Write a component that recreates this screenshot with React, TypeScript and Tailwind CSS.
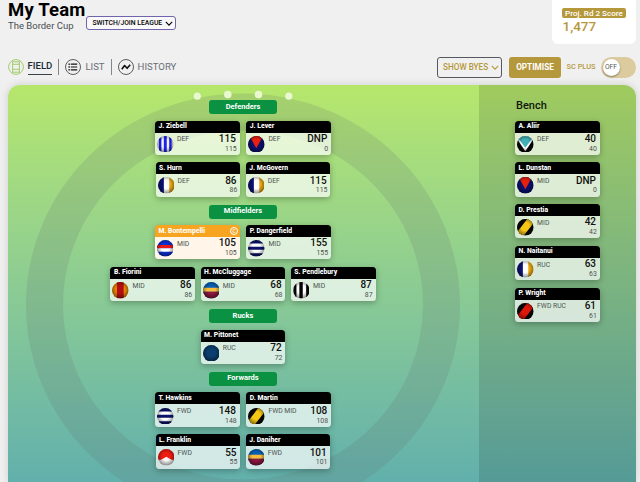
import { useId } from "react";
import clsx from "clsx";

type Team =
  | "north"
  | "melbourne"
  | "eagles"
  | "bulldogs"
  | "geelong"
  | "suns"
  | "lions"
  | "magpies"
  | "carlton"
  | "tigers"
  | "swans"
  | "power"
  | "bombers";

interface Player {
  name: string;
  pos: string;
  team: Team;
  score: string;
  proj: string;
  captain?: boolean;
}

interface Line {
  title: string;
  rows: { gap: string; players: Player[] }[];
}

const lines: Line[] = [
  {
    title: "Defenders",
    rows: [
      {
        gap: "gap-[6.6px]",
        players: [
          { name: "J. Ziebell", pos: "DEF", team: "north", score: "115", proj: "115" },
          { name: "J. Lever", pos: "DEF", team: "melbourne", score: "DNP", proj: "0" },
        ],
      },
      {
        gap: "gap-[5.4px]",
        players: [
          { name: "S. Hurn", pos: "DEF", team: "eagles", score: "86", proj: "86" },
          { name: "J. McGovern", pos: "DEF", team: "eagles", score: "115", proj: "115" },
        ],
      },
    ],
  },
  {
    title: "Midfielders",
    rows: [
      {
        gap: "gap-[6.6px]",
        players: [
          { name: "M. Bontempelli", pos: "MID", team: "bulldogs", score: "105", proj: "105", captain: true },
          { name: "P. Dangerfield", pos: "MID", team: "geelong", score: "155", proj: "155" },
        ],
      },
      {
        gap: "gap-[5.4px]",
        players: [
          { name: "B. Fiorini", pos: "MID", team: "suns", score: "86", proj: "86" },
          { name: "H. McCluggage", pos: "MID", team: "lions", score: "68", proj: "68" },
          { name: "S. Pendlebury", pos: "MID", team: "magpies", score: "87", proj: "87" },
        ],
      },
    ],
  },
  {
    title: "Rucks",
    rows: [
      {
        gap: "gap-0",
        players: [{ name: "M. Pittonet", pos: "RUC", team: "carlton", score: "72", proj: "72" }],
      },
    ],
  },
  {
    title: "Forwards",
    rows: [
      {
        gap: "gap-[6.6px]",
        players: [
          { name: "T. Hawkins", pos: "FWD", team: "geelong", score: "148", proj: "148" },
          { name: "D. Martin", pos: "FWD MID", team: "tigers", score: "108", proj: "108" },
        ],
      },
      {
        gap: "gap-[5.4px]",
        players: [
          { name: "L. Franklin", pos: "FWD", team: "swans", score: "55", proj: "55" },
          { name: "J. Daniher", pos: "FWD", team: "lions", score: "101", proj: "101" },
        ],
      },
    ],
  },
];

const bench: Player[] = [
  { name: "A. Aliir", pos: "DEF", team: "power", score: "40", proj: "40" },
  { name: "L. Dunstan", pos: "MID", team: "melbourne", score: "DNP", proj: "0" },
  { name: "D. Prestia", pos: "MID", team: "tigers", score: "42", proj: "42" },
  { name: "N. Naitanui", pos: "RUC", team: "eagles", score: "63", proj: "63" },
  { name: "P. Wright", pos: "FWD RUC", team: "bombers", score: "61", proj: "61" },
];

// Guernsey patterns, drawn on a 34x34 grid and clipped to a ball
const patterns: Record<Team, React.ReactNode> = {
  north: (
    <>
      <rect width="34" height="34" fill="#f4f4ff" />
      <path d="M4 0h5v34H4zM14 0h6v34h-6zM25 0h5v34h-5z" fill="#1a22ee" />
    </>
  ),
  melbourne: (
    <>
      <rect width="34" height="34" fill="#0a1070" />
      <path d="M3 0h28L17 25z" fill="#e8210c" />
    </>
  ),
  eagles: (
    <>
      <rect width="34" height="34" fill="#fff" />
      <path d="M0 0h12v34H0z" fill="#0b1272" />
      <path d="M23 0h11v34H23z" fill="#eeab14" />
    </>
  ),
  bulldogs: (
    <>
      <rect width="34" height="34" fill="#0c2fd6" />
      <path d="M0 10h34v7H0z" fill="#ea1a1a" />
      <path d="M0 17h34v7H0z" fill="#fff" />
    </>
  ),
  geelong: (
    <>
      <rect width="34" height="34" fill="#fff" />
      <path d="M0 0h34v7H0zM0 14h34v6H0zM0 27h34v7H0z" fill="#0b1268" />
    </>
  ),
  suns: (
    <>
      <rect width="34" height="34" fill="#ee8a08" />
      <path d="M10 0h14v34H10z" fill="#b30d12" />
    </>
  ),
  lions: (
    <>
      <rect width="34" height="34" fill="#0860b4" />
      <path d="M0 12h34v8H0z" fill="#f9bb3c" />
      <path d="M0 20h34v14H0z" fill="#8d173f" />
    </>
  ),
  magpies: (
    <>
      <rect width="34" height="34" fill="#fff" />
      <path d="M1 0h6v34H1zM13 0h7v34h-7zM27 0h6v34h-6z" fill="#050505" />
    </>
  ),
  carlton: <rect width="34" height="34" fill="#0b3e6e" />,
  tigers: (
    <>
      <rect width="34" height="34" fill="#060606" />
      <path d="M21 0h13v8L14 34H0v-7z" fill="#f4c616" />
    </>
  ),
  swans: (
    <>
      <rect width="34" height="34" fill="#f5f5f5" />
      <path d="M0 0h34v22l-6 0-6-3-5-3-5 3-6 3H0z" fill="#ef1c10" />
    </>
  ),
  power: (
    <>
      <rect width="34" height="34" fill="#050505" />
      <path d="M0 6l17 25L34 6V0H0z" fill="#fff" />
      <path d="M3 0h28v5L17 24 3 5z" fill="#3fb0b6" />
    </>
  ),
  bombers: (
    <>
      <rect width="34" height="34" fill="#060606" />
      <path d="M21 0h13v8L14 34H0v-7z" fill="#de1709" />
    </>
  ),
};

function TeamBall({ team }: { team: Team }) {
  const id = useId();

  return (
    <svg viewBox="0 0 34 34" className="size-[16.6px] shrink-0">
      <defs>
        <clipPath id={`${id}-clip`}>
          <circle cx="17" cy="17" r="17" />
        </clipPath>
        <radialGradient id={`${id}-shade`} cx="50%" cy="45%" r="55%">
          <stop offset="45%" stopColor="#000" stopOpacity="0" />
          <stop offset="100%" stopColor="#000" stopOpacity="0.45" />
        </radialGradient>
      </defs>
      <g clipPath={`url(#${id}-clip)`}>
        {patterns[team]}
        <rect width="34" height="34" fill={`url(#${id}-shade)`} />
      </g>
    </svg>
  );
}

function PlayerCard({ player }: { player: Player }) {
  return (
    <div className="h-[34.3px] w-[84.8px] shrink-0 overflow-hidden rounded-[3.5px] shadow-[0_2px_6px_rgba(0,0,0,0.28)]">
      <div
        className={clsx(
          "flex h-[12px] items-center justify-between pr-[1.5px] pl-[3.5px] text-[6.8px] leading-none font-extrabold text-white",
          player.captain ? "bg-[#f7a521]" : "bg-black"
        )}
      >
        <span>{player.name}</span>
        {player.captain && (
          <span className="flex size-[8px] items-center justify-center rounded-full border-[0.8px] border-white text-[5px] font-medium">
            C
          </span>
        )}
      </div>
      <div
        className={clsx(
          "flex h-[22.3px] pt-[3.2px] pr-[3px] pl-[2px]",
          player.captain ? "bg-[#fff6e9]" : "bg-white/70"
        )}
      >
        <TeamBall team={player.team} />
        <span className="mt-[0.6px] ml-[3.5px] text-[6.8px] leading-[7px] text-[#4c5350]">{player.pos}</span>
        <div className="-mt-[1.8px] ml-auto flex flex-col items-end">
          <span className="pr-[0.8px] text-[10px] leading-[10px] font-medium text-[#111]">{player.score}</span>
          <span className="mt-[0.8px] text-[6.9px] leading-[8px] text-[#4c5350]">{player.proj}</span>
        </div>
      </div>
    </div>
  );
}

function FieldBackdrop() {
  return (
    <svg viewBox="0 0 471 397" className="absolute top-0 left-0 h-[397px] w-[471px]">
      <ellipse cx="235" cy="220" rx="198.500" ry="193" fill="none" stroke="#606c6c" strokeOpacity="0.17" strokeWidth="37" />
      <g fill="#e9f8d0">
        <circle cx="189.300" cy="11.200" r="3.600" />
        <circle cx="219.800" cy="9.500" r="3.800" />
        <circle cx="250.500" cy="9.500" r="3.800" />
        <circle cx="280.800" cy="11.200" r="3.600" />
      </g>
    </svg>
  );
}

function Chevron({ className }: { className?: string }) {
  return (
    <svg viewBox="0 0 8 5" className={className} fill="none" stroke="currentColor" strokeWidth="1.1">
      <path d="M0.8 0.8 4 4.100 7.200 0.800" />
    </svg>
  );
}

function Tabs() {
  return (
    <nav className="flex items-center text-[9.6px] text-[#686f76]">
      <svg viewBox="0 0 16 16" className="-ml-[0.5px] size-4" fill="none" stroke="#8dc34b" strokeWidth="0.8">
        <circle cx="8" cy="8" r="7.400" />
        <path d="M4.600 2.600v10.800M11.400 2.600v10.800M4.600 5.300h6.800M4.600 10.300h6.800M4.600 2.800h6.800M4.600 13.200h6.800" />
      </svg>
      <span className="ml-[4px] h-[15px] border-b border-[#3b4248] text-[9.6px] leading-[11.5px] font-medium text-[#1b2b38]">
        FIELD
      </span>
      <span className="ml-[6px] h-4 w-px bg-[#83878a]" />
      <svg viewBox="0 0 16 16" className="ml-[6px] size-4" fill="none" stroke="#33373b" strokeWidth="0.8">
        <circle cx="8" cy="8" r="7.500" />
        <path d="M5.800 5.200h6.400M5.800 8h6.400M5.800 10.800h6.400" strokeWidth="1.200" stroke="#111" />
        <path d="M3.500 5.200h1.300M3.500 8h1.300M3.500 10.800h1.300" strokeWidth="1.400" stroke="#111" />
      </svg>
      <span className="ml-[4px]">LIST</span>
      <span className="ml-[6px] h-4 w-px bg-[#83878a]" />
      <svg viewBox="0 0 16 16" className="ml-[6px] size-4" fill="none" stroke="#33373b" strokeWidth="0.8">
        <circle cx="8" cy="8" r="7.500" />
        <path d="M3.800 10.300 6.600 6.500 9.100 9.300 12.200 5.700" strokeWidth="1.600" stroke="#111" strokeLinejoin="round" />
      </svg>
      <span className="ml-[4px]">HISTORY</span>
    </nav>
  );
}

function Header() {
  return (
    <header className="flex h-[57px] items-start justify-between pr-[4px] pl-[8px]">
      <div className="flex">
        <div className="w-[78px]">
          <h1 className="text-[18.5px] leading-[20.5px] font-bold tracking-[0.2px] whitespace-nowrap text-black">My Team</h1>
          <p className="text-[9.5px] leading-[10px] text-[#484d51]">The Border Cup</p>
        </div>
        <button className="mt-[16px] flex h-[14px] w-[90px] items-center justify-between rounded-[3px] border border-[#7065ad] bg-white/60 pr-[2px] pl-[5.5px] text-[6.8px] font-medium whitespace-nowrap text-black">
          SWITCH/JOIN LEAGUE
          <Chevron className="h-[5px] w-[8px]" />
        </button>
      </div>
      <div className="h-[44px] w-[84px] rounded-b-[6px] bg-white pt-[8px] pl-[10px]">
        <div className="flex h-[10px] w-[64px] items-center justify-center rounded-[2px] bg-[#b6983c] text-[8.1px] leading-none font-medium whitespace-nowrap text-white">
          Proj. Rd 2 Score
        </div>
        <div className="mt-[1px] pl-[0.5px] text-[13.5px] leading-[15px] font-medium text-[#b6983c]">1,477</div>
      </div>
    </header>
  );
}

function Toolbar() {
  return (
    <div className="flex h-[20px] items-center justify-between pr-[4px] pl-[8px]">
      <Tabs />
      <div className="flex items-center">
        <button className="flex h-[21px] w-[65px] items-center justify-between rounded-[3px] border border-[#55585c] pr-[2px] pl-[5px] text-[8.2px] font-medium whitespace-nowrap text-[#b6983c]">
          SHOW BYES
          <Chevron className="h-[5px] w-[8px]" />
        </button>
        <button className="ml-[7px] h-[21px] w-[52px] rounded-[3px] bg-[#b6983c] text-[8.2px] font-bold text-white">
          OPTIMISE
        </button>
        <span className="ml-[5.500px] w-[30px] text-[7.4px] font-medium whitespace-nowrap text-[#b6983c]">SC PLUS</span>
        <div className="ml-[4.500px] flex h-[21px] w-[35px] items-center rounded-full bg-[#dbcb9e] pl-[1.500px]">
          <span className="flex size-[17px] items-center justify-center rounded-full bg-white pt-px text-[6.700px] text-[#555] shadow-[0_1px_2px_rgba(0,0,0,0.4)]">
            OFF
          </span>
        </div>
      </div>
    </div>
  );
}

export default function App() {
  return (
    <div className="h-[482px] w-[640px] overflow-hidden bg-[#f0f0f0] font-['Roboto',sans-serif]">
      <Header />
      <Toolbar />

      <main className="mt-[8px] mr-[4px] ml-[8px] flex h-[397px] overflow-hidden rounded-t-[12px] bg-linear-to-b from-[#b6e76b] to-[#62b0ac] shadow-[0_0_8px_rgba(0,0,0,0.15)]">
        <section className="relative w-[471px]">
          <FieldBackdrop />
          <div className="relative flex flex-col gap-[8px] pt-[15px] pr-px">
            {lines.map((line) => (
              <div key={line.title} className="flex flex-col items-center">
                <h2 className="flex h-[14px] w-[68px] items-center justify-center rounded-[3px] bg-[#0a9141] pb-[1.500px] text-[7.500px] leading-none font-bold text-white">
                  {line.title}
                </h2>
                <div className="mt-[6.500px] flex flex-col items-center gap-[7.500px]">
                  {line.rows.map((row, i) => (
                    <div key={i} className={clsx("flex", row.gap)}>
                      {row.players.map((p) => (
                        <PlayerCard key={p.name} player={p} />
                      ))}
                    </div>
                  ))}
                </div>
              </div>
            ))}
          </div>
        </section>

        <aside className="flex-1 bg-black/12 pt-[13px] pl-[36px]">
          <h2 className="pl-[1px] text-[11px] leading-[15px] font-medium text-[#10180c]">Bench</h2>
          <div className="mt-[7.500px] flex flex-col gap-[7.500px]">
            {bench.map((p) => (
              <PlayerCard key={p.name} player={p} />
            ))}
          </div>
        </aside>
      </main>
    </div>
  );
}
